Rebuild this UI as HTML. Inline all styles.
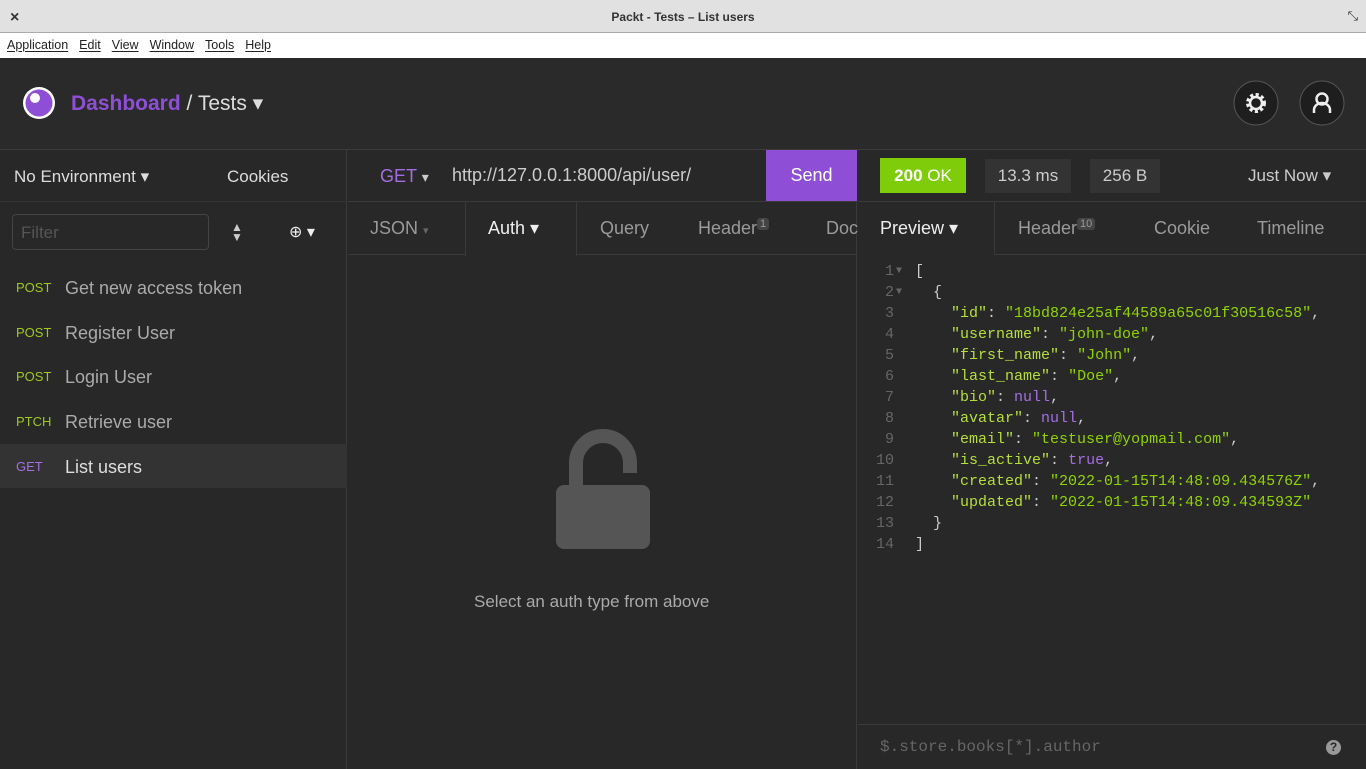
<!DOCTYPE html>
<html><head><style>
*{box-sizing:border-box;margin:0;padding:0}
body{width:1366px;height:769px;overflow:hidden;background:#282828;font-family:"Liberation Sans",sans-serif;color:#ddd;position:relative}
.abs{position:absolute}
.title{left:0;top:0;width:1366px;height:33px;background:#e1e1e1;color:#333;font-size:12px;font-weight:bold;text-align:center;line-height:34px;border-bottom:1px solid #aaa}
.menu{left:0;top:33px;width:1366px;height:25px;background:#fff;color:#222;font-size:12.5px;line-height:25px}
.menu span{margin-left:7px;margin-right:4px;text-decoration:underline;text-decoration-thickness:1px;text-underline-offset:2px}
.top{left:0;top:58px;width:1366px;height:92px;background:#2a2a2a;border-bottom:1px solid #3c3c3c}
.side{left:0;top:150px;width:347px;height:619px;background:#282828;border-right:1px solid #3a3a3a}
.mid{left:348px;top:150px;width:509px;height:619px;background:#282828;border-right:1px solid #3a3a3a}
.right{left:858px;top:150px;width:508px;height:619px;background:#282828}
.req{font-size:18px;color:#ccc}
.tab{font-size:18px;color:#9a9a9a;position:absolute;top:218px}
.code{font-family:"Liberation Mono",monospace;font-size:15px;line-height:21px;white-space:pre;color:#ccc}
.k{color:#b5df3a}.s{color:#8fd400}.n{color:#a36ee0}
.ln{color:#666;text-align:right;width:36px}
</style></head><body>
<div class="abs title">Packt - Tests – List users</div>
<div class="abs" style="left:10px;top:9px;font-size:16px;color:#333;font-weight:bold">×</div>
<div class="abs" style="right:8px;top:8px;font-size:13px;color:#333">⤡</div>
<div class="abs menu"><span>Application</span><span>Edit</span><span>View</span><span>Window</span><span>Tools</span><span>Help</span></div>
<div class="abs top"></div>
<svg class="abs" style="left:22px;top:86px" width="34" height="34"><circle cx="17" cy="17" r="16" fill="#fff"/><circle cx="17" cy="17" r="13.5" fill="#8e4fd6"/><circle cx="13" cy="12" r="5" fill="#fff"/><circle cx="13" cy="12" r="3" fill="#8e4fd6" opacity="0"/></svg>
<div class="abs" style="left:71px;top:91px;font-size:21px"><b style="color:#8e4fd6">Dashboard</b> <span style="color:#ddd">/ Tests ▾</span></div>
<svg class="abs" style="left:1233px;top:80px" width="46" height="46"><circle cx="23" cy="23" r="22" fill="#1e1e1e" stroke="#555"/><circle cx="23" cy="23" r="8" fill="none" stroke="#eee" stroke-width="4" stroke-dasharray="3 2.3"/><circle cx="23" cy="23" r="6" fill="none" stroke="#eee" stroke-width="2.5"/></svg>
<svg class="abs" style="left:1299px;top:80px" width="46" height="46"><circle cx="23" cy="23" r="22" fill="#1e1e1e" stroke="#555"/><circle cx="23" cy="19" r="5.5" fill="none" stroke="#eee" stroke-width="2.5"/><path d="M15 33 v-3 a8 7 0 0 1 16 0 v3" fill="none" stroke="#eee" stroke-width="2.5"/></svg>

<div class="abs side"></div>
<div class="abs" style="left:14px;top:167px;font-size:17px">No Environment ▾</div>
<div class="abs" style="left:227px;top:167px;font-size:17px">Cookies</div>
<div class="abs" style="left:0;top:201px;width:347px;height:1px;background:#333"></div>
<div class="abs" style="left:12px;top:214px;width:197px;height:36px;border:1px solid #444;border-radius:4px;color:#555;font-size:17px;padding:8px">Filter</div>
<div class="abs" style="left:231px;top:222px;font-size:12px;line-height:10px;color:#ccc">▲<br>▼</div>
<div class="abs" style="left:289px;top:222px;font-size:16px;color:#eee">⊕ ▾</div>
<div class="abs" style="left:0;top:444px;width:347px;height:44px;background:#333"></div>
<div class="abs" style="left:16px;top:266px;font-size:13px;line-height:44.7px;color:#9ec91d">POST<br>POST<br>POST<br>PTCH<br><span style="color:#a36ee0">GET</span></div>
<div class="abs" style="left:65px;top:266px;font-size:18px;line-height:44.7px;color:#aaa">Get new access token<br>Register User<br>Login User<br>Retrieve user<br><span style="color:#ddd">List users</span></div>

<div class="abs mid"></div>
<div class="abs" style="left:348px;top:201px;width:509px;height:1px;background:#3a3a3a"></div>
<div class="abs" style="left:380px;top:166px;font-size:18px;color:#a36ee0">GET <span style="color:#ccc;font-size:14px">▾</span></div>
<div class="abs req" style="left:452px;top:165px">http://127.0.0.1:8000/api/user/</div>
<div class="abs" style="left:766px;top:150px;width:91px;height:51px;background:#8e4fd6;color:#fff;font-size:18px;text-align:center;line-height:51px">Send</div>
<div class="abs" style="left:348px;top:254px;width:509px;height:1px;background:#3a3a3a"></div>
<div class="abs" style="left:465px;top:202px;width:112px;height:54px;background:#282828;border-left:1px solid #3a3a3a;border-right:1px solid #3a3a3a"></div>
<div class="tab" style="left:370px">JSON <span style="font-size:11px;color:#666">▾</span></div>
<div class="tab" style="left:488px;color:#eee">Auth ▾</div>
<div class="tab" style="left:600px">Query</div>
<div class="tab" style="left:698px">Header<sup style="font-size:11px;background:#444;padding:0 3px;border-radius:3px">1</sup></div>
<div class="tab" style="left:826px">Doc</div>
<svg class="abs" style="left:554px;top:425px" width="98" height="126"><path d="M22 60 V38 a27 27 0 0 1 54 0 v10" fill="none" stroke="#555" stroke-width="14"/><rect x="2" y="60" width="94" height="64" rx="8" fill="#555"/></svg>
<div class="abs" style="left:474px;top:592px;font-size:17px;color:#aaa">Select an auth type from above</div>

<div class="abs right"></div>
<div class="abs" style="left:880px;top:158px;width:86px;height:35px;background:#7fcc0a;color:#fff;font-size:17px;line-height:35px;text-align:center"><b>200</b> OK</div>
<div class="abs" style="left:985px;top:159px;width:86px;height:34px;background:#333;color:#ccc;font-size:17px;line-height:34px;text-align:center">13.3 ms</div>
<div class="abs" style="left:1090px;top:159px;width:70px;height:34px;background:#333;color:#ccc;font-size:17px;line-height:34px;text-align:center">256 B</div>
<div class="abs" style="left:1248px;top:166px;font-size:17px;color:#ccc">Just Now ▾</div>
<div class="abs" style="left:858px;top:201px;width:508px;height:1px;background:#3a3a3a"></div>
<div class="abs" style="left:994px;top:254px;width:372px;height:1px;background:#3a3a3a"></div>
<div class="abs" style="left:994px;top:202px;width:1px;height:53px;background:#3a3a3a"></div>
<div class="tab" style="left:880px;color:#eee">Preview ▾</div>
<div class="tab" style="left:1018px">Header<sup style="font-size:11px;background:#444;padding:0 3px;border-radius:3px">10</sup></div>
<div class="tab" style="left:1154px">Cookie</div>
<div class="tab" style="left:1257px">Timeline</div>
<div class="abs code ln" style="left:858px;top:261px">1
2
3
4
5
6
7
8
9
10
11
12
13
14</div>
<div class="abs code" style="left:896px;top:261px;color:#666;font-size:10px;line-height:21px">▼
▼</div>
<div class="abs code" style="left:915px;top:261px">[
  {
    <span class="k">"id"</span>: <span class="s">"18bd824e25af44589a65c01f30516c58"</span>,
    <span class="k">"username"</span>: <span class="s">"john-doe"</span>,
    <span class="k">"first_name"</span>: <span class="s">"John"</span>,
    <span class="k">"last_name"</span>: <span class="s">"Doe"</span>,
    <span class="k">"bio"</span>: <span class="n">null</span>,
    <span class="k">"avatar"</span>: <span class="n">null</span>,
    <span class="k">"email"</span>: <span class="s">"testuser@yopmail.com"</span>,
    <span class="k">"is_active"</span>: <span class="n">true</span>,
    <span class="k">"created"</span>: <span class="s">"2022-01-15T14:48:09.434576Z"</span>,
    <span class="k">"updated"</span>: <span class="s">"2022-01-15T14:48:09.434593Z"</span>
  }
]</div>
<div class="abs" style="left:858px;top:724px;width:508px;height:1px;background:#3a3a3a"></div>
<div class="abs code" style="left:880px;top:737px;color:#666;font-size:16px">$.store.books[*].author</div>
<div class="abs" style="left:1326px;top:740px;width:15px;height:15px;border-radius:50%;background:#999;color:#282828;font-size:12px;font-weight:bold;text-align:center;line-height:15px">?</div>
</body></html>
